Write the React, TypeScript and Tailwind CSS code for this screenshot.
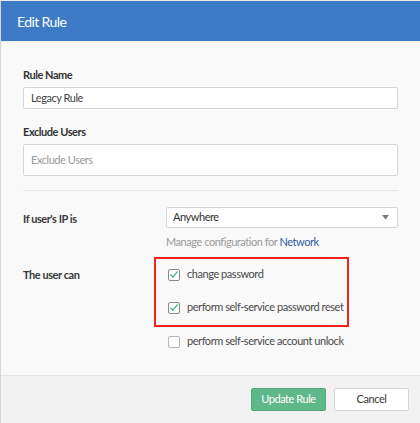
import React from "react";

const font = { fontFamily: 'Lato, "Liberation Sans", sans-serif' };

function Check({ checked }: { checked: boolean }) {
  return (
    <span className={`w-[12px] h-[12px] rounded-[2px] bg-white flex items-center justify-center shrink-0 ${checked ? "border border-[#8a8a8a]" : "border border-[#b5b5b5]"}`}>
      {checked && (
        <svg width="10" height="9" viewBox="0 0 10 9">
          <path d="M1.5 4.6 L3.9 7.2 L8.6 1.4" fill="none" stroke="#4cb27f" strokeWidth="1.3" />
        </svg>
      )}
    </span>
  );
}

export default function App() {
  return (
    <div className="w-[420px] h-[423px] bg-[#e9e9e9] pt-px whitespace-nowrap tracking-[-0.45px]" style={font}>
      <div className="h-[422px] border-l border-[#d6d6d6] flex flex-col">
        <div className="h-[40px] bg-[#3d7bc7] flex items-center pl-[16px] text-white text-[14px] tracking-[-0.6px]">Edit Rule</div>
        <div className="h-px bg-[#ededed]" />
        <div className="flex-1 bg-[#f9f9f9] pl-[22px] pr-[22px] pt-[26px]">
          <div className="text-[11px] font-bold text-[#333333] leading-[14px]">Rule Name</div>
          <div className="mt-[5px] h-[22px] border border-[#d6d6d6] rounded-[2px] bg-white flex items-center px-[7px] text-[11px] text-[#444444]">Legacy Rule</div>
          <div className="mt-[16px] text-[11px] font-bold text-[#333333] leading-[14px]">Exclude Users</div>
          <div className="mt-[5px] h-[32px] border border-[#d6d6d6] rounded-[2px] bg-white flex items-center px-[7px] text-[11px] text-[#9a9a9a]">Exclude Users</div>
          <div className="mt-[14px] h-px bg-[#e6e6e6]" />
          <div className="mt-[16px] flex">
            <div className="w-[143px] text-[11px] font-bold text-[#3a3a3a] pt-[4px]">If user's IP is</div>
            <div className="flex-1">
              <div className="h-[21px] border border-[#d6d6d6] rounded-[2px] bg-white flex items-center justify-between pl-[6px] pr-[8px] text-[11px] text-[#2f2f2f]">
                <span>Anywhere</span>
                <svg width="7" height="5" viewBox="0 0 7 5"><path d="M0 0 H7 L3.5 4.5 Z" fill="#7a7a7a" /></svg>
              </div>
              <div className="mt-[6px] text-[11px] text-[#9a9a9a]">Manage configuration for <span className="text-[#2d5a9e]">Network</span></div>
            </div>
          </div>
          <div className="mt-[6px] flex">
            <div className="w-[131px] text-[11px] font-bold text-[#3a3a3a] pt-[10px]">The user can</div>
            <div className="flex-1">
              <div className="w-[195px] h-[70px] border-2 border-[#f0231b] pl-[12px] pt-[10px] flex flex-col gap-[21px]">
                <div className="flex items-center gap-[7px] text-[11px] text-[#4a4a4a] h-[12px]"><Check checked /> <span>change password</span></div>
                <div className="flex items-center gap-[7px] text-[11px] text-[#4a4a4a] h-[12px]"><Check checked /> <span>perform self-service password reset</span></div>
              </div>
              <div className="mt-[9px] pl-[14px] flex items-center gap-[7px] text-[11px] text-[#4a4a4a] h-[12px]"><Check checked={false} /> <span>perform self-service account unlock</span></div>
            </div>
          </div>
        </div>
        <div className="h-px bg-[#e4e4e4]" />
        <div className="h-[47px] bg-[#f2f2f2] flex items-start justify-end pr-[11px] pt-[12px] gap-[8px]">
          <div className="w-[75px] h-[23px] rounded-[2px] bg-[#5fb88a] border border-[#52a87c] text-white text-[11px] flex items-center justify-center">Update Rule</div>
          <div className="w-[75px] h-[23px] rounded-[2px] bg-white border border-[#d6d6d6] text-[#3a3a3a] text-[11px] flex items-center justify-center">Cancel</div>
        </div>
      </div>
    </div>
  );
}
